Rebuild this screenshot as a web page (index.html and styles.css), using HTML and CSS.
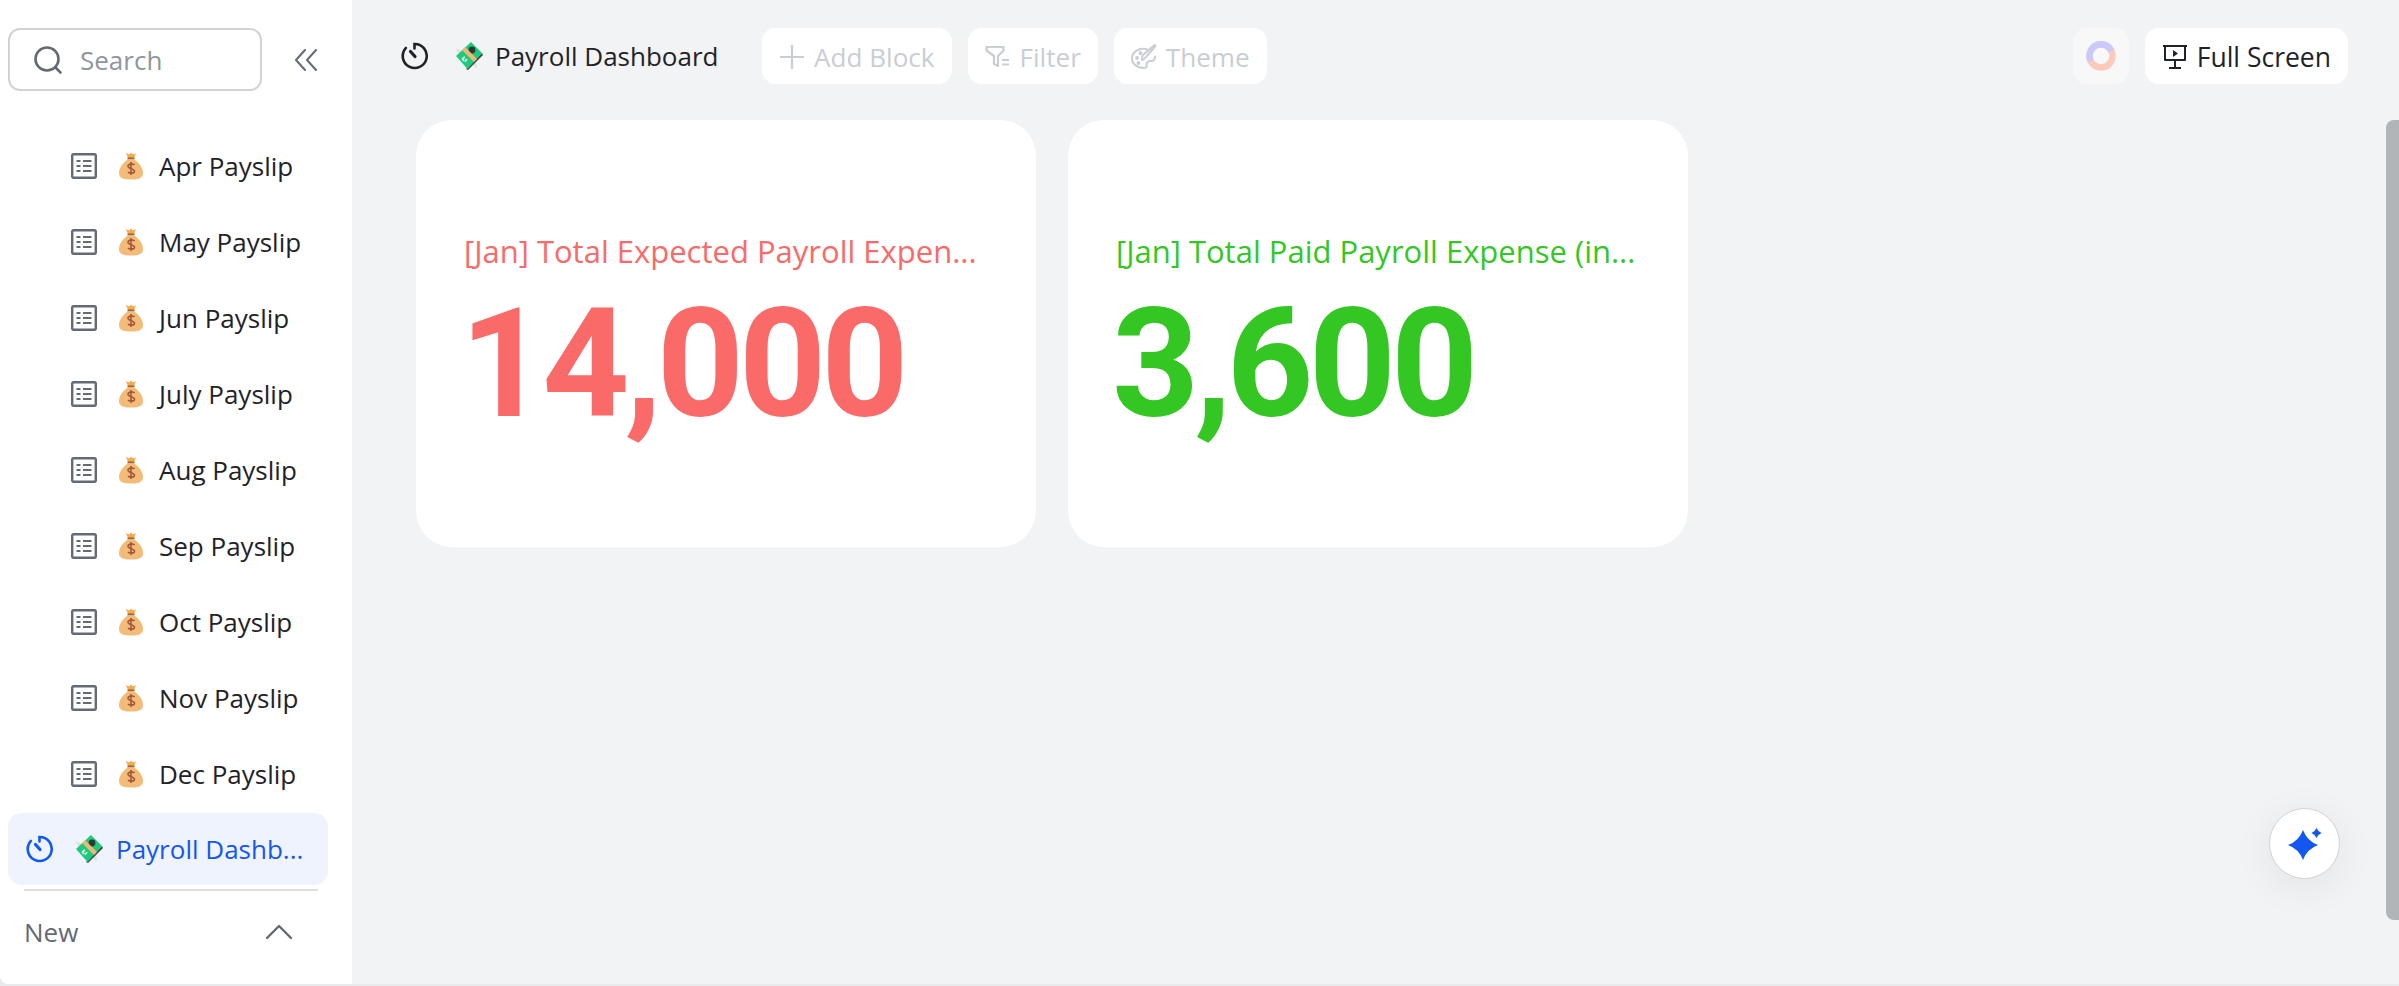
FILE: index.html
```html
<!DOCTYPE html>
<html lang="en">
<head>
  <meta charset="UTF-8">
  <title>Payroll Dashboard</title>
  <meta name="viewport" content="width=device-width, initial-scale=1.0">
  <link rel="stylesheet" href="styles.css">
</head>
<body>

  <!-- shared icons -->
  <svg class="sprite" width="0" height="0">
    <symbol id="i-table" viewBox="0 0 26 26">
      <rect x="1.200" y="1.200" width="23.600" height="23.600" rx="1.500" fill="none" stroke="currentColor" stroke-width="2.400"/>
      <path d="M5.500 8h4M12 8h8.500M5.500 13h4M12 13h8.500M5.500 18h4M12 18h8.500" fill="none" stroke="currentColor" stroke-width="2.200"/>
    </symbol>
    <symbol id="i-bag" viewBox="0 0 24 28">
      <path d="M7 1l3 1.500L12 .5l2 2L17 1l-2 5H9z" fill="#f4a94a"/>
      <rect x="8.500" y="5.500" width="7" height="2" fill="#a5622f"/>
      <path d="M9 7.500C5 10 0 15 0 21c0 5 4 6.500 12 6.500S24 26 24 21c0-6-5-11-9-13.500z" fill="#f2bb78"/>
      <path d="M15.500 13c-1-1.500-6-1.500-6.500 1-.6 3 7 2.500 6.500 5.500-.5 2.200-5.500 2-6.500.5M12 10v13" fill="none" stroke="#a3573a" stroke-width="1.600"/>
    </symbol>
    <symbol id="i-cash" viewBox="0 0 28 28">
      <path d="M0 6l13 5-5 8zM22 27l-8-8 7-4z" fill="#dfe2e3"/>
      <path d="M27 11l1 2-15 15-2-1z" fill="#3c4a45"/>
      <path d="M16 0l11 11-14.500 16L1 14z" fill="#1fca7c"/>
      <circle cx="17" cy="8" r="3.400" fill="#2b3a35"/>
      <path d="M8 7l3-3 12 12-3 3z" transform="translate(-1 1)" fill="#f0b877"/>
      <path d="M6.500 16.500l3-2.500.5 2-1.300 1 1 1.500-1.700 1zM13 17.500l-3 3-.5-2 1.300-1-1-1z" fill="#d8f7e8"/>
    </symbol>
    <symbol id="i-timer" viewBox="0 0 28 28">
      <path d="M13.500 6.500V2A12 12 0 1 1 4.800 6" fill="none" stroke="currentColor" stroke-width="2.600" stroke-linecap="round"/>
      <path d="M9.500 9.500l4.500 5" fill="none" stroke="currentColor" stroke-width="3.200" stroke-linecap="round"/>
    </symbol>
  </svg>

  <div class="app">

    <aside class="sidebar">
      <div class="side-top">
        <div class="search">
          <svg width="30" height="30" viewBox="0 0 30 30" fill="none" stroke="#646a73" stroke-width="2.600" stroke-linecap="round">
            <circle cx="14" cy="14" r="11.500"/>
            <path d="M23 23l4.500 4.500"/>
          </svg>
          <span>Search</span>
        </div>
        <svg class="collapse" width="24" height="22" viewBox="0 0 24 22" fill="none" stroke="#646a73" stroke-width="2" stroke-linecap="round" stroke-linejoin="round">
          <path d="M11 1L2 11l9 10M22 1l-9 10 9 10"/>
        </svg>
      </div>

      <ul class="list">
        <li><svg class="ic-table"><use href="#i-table"/></svg><svg class="ic-bag"><use href="#i-bag"/></svg>Apr Payslip</li>
        <li><svg class="ic-table"><use href="#i-table"/></svg><svg class="ic-bag"><use href="#i-bag"/></svg>May Payslip</li>
        <li><svg class="ic-table"><use href="#i-table"/></svg><svg class="ic-bag"><use href="#i-bag"/></svg>Jun Payslip</li>
        <li><svg class="ic-table"><use href="#i-table"/></svg><svg class="ic-bag"><use href="#i-bag"/></svg>July Payslip</li>
        <li><svg class="ic-table"><use href="#i-table"/></svg><svg class="ic-bag"><use href="#i-bag"/></svg>Aug Payslip</li>
        <li><svg class="ic-table"><use href="#i-table"/></svg><svg class="ic-bag"><use href="#i-bag"/></svg>Sep Payslip</li>
        <li><svg class="ic-table"><use href="#i-table"/></svg><svg class="ic-bag"><use href="#i-bag"/></svg>Oct Payslip</li>
        <li><svg class="ic-table"><use href="#i-table"/></svg><svg class="ic-bag"><use href="#i-bag"/></svg>Nov Payslip</li>
        <li><svg class="ic-table"><use href="#i-table"/></svg><svg class="ic-bag"><use href="#i-bag"/></svg>Dec Payslip</li>
      </ul>

      <div class="active-item">
        <svg class="ic-timer"><use href="#i-timer"/></svg>
        <svg class="ic-cash"><use href="#i-cash"/></svg>
        <span>Payroll Dashb...</span>
      </div>

      <div class="side-new">
        <span>New</span>
        <svg width="28" height="16" viewBox="0 0 28 16" fill="none" stroke="#646a73" stroke-width="2.400" stroke-linecap="round" stroke-linejoin="round">
          <path d="M2 14L14 2l12 12"/>
        </svg>
      </div>
    </aside>

    <main class="main">
      <div class="toolbar">
        <div class="title">
          <svg class="ic-timer"><use href="#i-timer"/></svg>
          <svg class="ic-cash"><use href="#i-cash"/></svg>
          <span>Payroll Dashboard</span>
        </div>
        <div class="tools">
          <div class="btn off">
            <svg width="26" height="26" viewBox="0 0 26 26" fill="none" stroke="currentColor" stroke-width="2.200"><path d="M13 1v24M1 13h24"/></svg>
            Add Block
          </div>
          <div class="btn off">
            <svg width="26" height="26" viewBox="0 0 26 26" fill="none" stroke="currentColor" stroke-width="2.200" stroke-linejoin="round"><path d="M1.500 3h17v3.500L13 12v10l-4-2v-8L1.500 6.500zM17 16h7M17 20.500h7"/></svg>
            Filter
          </div>
          <div class="btn off">
            <svg width="26" height="26" viewBox="0 0 26 26" fill="none" stroke="currentColor" stroke-width="2" stroke-linecap="round"><path d="M16 5.500C8 3 1 8 1 14.500 1 20 6 24 13 24c3 0 3-2 2.500-3.500s1.500-3.500 4-3.500 4.500-1 4.500-4.500"/><path d="M11 16c2 0 2.500-1 3.500-2.500L24.500 2l-1-1L12 11c-1 1-1 3-1 5z"/><circle cx="6" cy="14" r=".9"/><circle cx="9.500" cy="9" r=".9"/><circle cx="7.500" cy="19" r=".9"/></svg>
            Theme
          </div>
        </div>
        <div class="right">
          <div class="logo-box">
            <svg width="30" height="30" viewBox="0 0 30 30" fill="none" stroke-width="6.500">
              <circle cx="15" cy="15" r="11.500" stroke="#fccabd"/>
              <path d="M25.500 10A11.500 11.500 0 0 0 3.500 15c0 2 .5 3.500 1.200 5" stroke="#c9c9fb"/>
            </svg>
          </div>
          <div class="btn">
            <svg width="26" height="26" viewBox="0 0 26 26" fill="none" stroke="currentColor" stroke-width="2" stroke-linejoin="round"><path d="M1 2h24M3 2v14h20V2M13 16v7M7 24h12"/><path d="M11 6l5 3.500-5 3.500z" fill="currentColor" stroke="none"/></svg>
            Full Screen
          </div>
        </div>
      </div>

      <div class="cards">
        <div class="card red">
          <div class="card-name">[Jan] Total Expected Payroll Expen...</div>
          <div class="card-num">14,000</div>
        </div>
        <div class="card green">
          <div class="card-name">[Jan] Total Paid Payroll Expense (in...</div>
          <div class="card-num">3,600</div>
        </div>
      </div>

      <div class="scroll-thumb"></div>

      <div class="ai-btn">
        <svg width="34" height="32" viewBox="0 0 34 32" fill="#1456f0">
          <path d="M15 2Q19 13 30 17 19 21 15 32 11 21 0 17 11 13 15 2z"/>
          <path d="M28.500 0Q30 3.500 33.500 5 30 6.500 28.500 10 27 6.500 23.500 5 27 3.500 28.500 0z"/>
        </svg>
      </div>
    </main>

  </div>

</body>
</html>
```

FILE: styles.css
```css
/* Reset */
* {
  margin: 0;
  padding: 0;
  box-sizing: border-box;
}

body {
  background-color: #e9eaec;
  color: #1f2329;
  font-family: 'Open Sans', 'Noto Sans', sans-serif;
  height: 986px;
  overflow: hidden;
}

.sprite {
  position: absolute;
}

.app {
  display: flex;
  height: 984px;
}

/* Sidebar */
.sidebar {
  width: 352px;
  flex-shrink: 0;
  background: #fff;
  border-bottom-left-radius: 8px;
  padding: 28px 24px 0 8px;
  display: flex;
  flex-direction: column;
}

.side-top {
  display: flex;
  align-items: center;
  justify-content: space-between;
}

.search {
  width: 254px;
  height: 63px;
  border: 2px solid #d0d3d6;
  border-radius: 12px;
  display: flex;
  align-items: center;
  gap: 17px;
  padding-left: 23px;
  color: #8f959e;
  font-size: 26px;
}

.collapse {
  margin-right: 10px;
}

.list {
  list-style: none;
  margin-top: 37px;
}

.list li {
  height: 76px;
  display: flex;
  align-items: center;
  padding-left: 63px;
  font-size: 26px;
  line-height: 76px;
}

.ic-table {
  width: 26px;
  height: 26px;
  color: #646a73;
  margin-right: 22px;
}

.ic-bag {
  width: 24px;
  height: 28px;
  margin-right: 16px;
}

.ic-timer {
  width: 28px;
  height: 28px;
}

.ic-cash {
  width: 28px;
  height: 28px;
}

.active-item {
  height: 72px;
  margin-top: 1px;
  background: #eff3fe;
  border-radius: 14px;
  color: #1456f0;
  font-size: 26px;
  display: flex;
  align-items: center;
  padding-left: 18px;
}

.active-item .ic-timer {
  margin-right: 21px;
}

.active-item .ic-cash {
  margin-right: 13px;
}

.side-new {
  margin: 4px 10px 0 16px;
  border-top: 2px solid #dedede;
  height: 88px;
  display: flex;
  align-items: center;
  justify-content: space-between;
  padding: 0 25px 4px 0;
  color: #646a73;
  font-size: 26px;
}

/* Main area */
.main {
  flex: 1;
  background: #f2f3f5;
  position: relative;
  padding: 28px 51px 0 64px;
}

.toolbar {
  display: flex;
  align-items: center;
  height: 56px;
}

.title {
  display: flex;
  align-items: center;
  font-size: 26px;
  width: 361px;
  flex-shrink: 0;
  margin-left: -15px;
}

.title .ic-timer {
  margin-right: 26px;
}

.title .ic-cash {
  margin-right: 12px;
}

.tools {
  display: flex;
  gap: 16px;
}

.right {
  margin-left: auto;
  display: flex;
  gap: 16px;
}

.btn {
  height: 56px;
  background: #fff;
  border-radius: 14px;
  display: flex;
  align-items: center;
  gap: 9px;
  padding: 1px 17px 0;
  font-size: 26.5px;
  white-space: nowrap;
}

.btn.off {
  color: #c9cdd4;
  font-size: 26.1px;
}

.logo-box {
  width: 56px;
  height: 56px;
  background: #f8f8f9;
  border-radius: 14px;
  display: flex;
  align-items: center;
  justify-content: center;
}

.cards {
  display: flex;
  gap: 32px;
  margin-top: 36px;
}

.card {
  width: 620px;
  height: 427px;
  background: #fff;
  border-radius: 36px;
  padding: 16px 48px 0;
  display: flex;
  flex-direction: column;
  justify-content: center;
}

.card-name {
  font-size: 31px;
  line-height: 42px;
  margin-bottom: 2px;
  white-space: nowrap;
}

.card-num {
  font-family: Roboto, sans-serif;
  font-weight: 700;
  font-size: 152px;
  line-height: 180px;
  letter-spacing: -5px;
  margin-left: -4px;
}

.red { color: #fa6a68; }
.green { color: #34c724; }

.scroll-thumb {
  position: absolute;
  top: 120px;
  right: 0;
  width: 13px;
  height: 800px;
  background: #b1b5b8;
  border-radius: 8px 0 0 8px;
}

.ai-btn {
  position: absolute;
  left: 1917px;
  top: 808px;
  width: 71px;
  height: 71px;
  background: #fff;
  border: 1px solid #d0d3d6;
  border-radius: 50%;
  box-shadow: 0 8px 40px rgba(0, 0, 0, 0.07);
  display: flex;
  align-items: center;
  justify-content: center;
}
```
